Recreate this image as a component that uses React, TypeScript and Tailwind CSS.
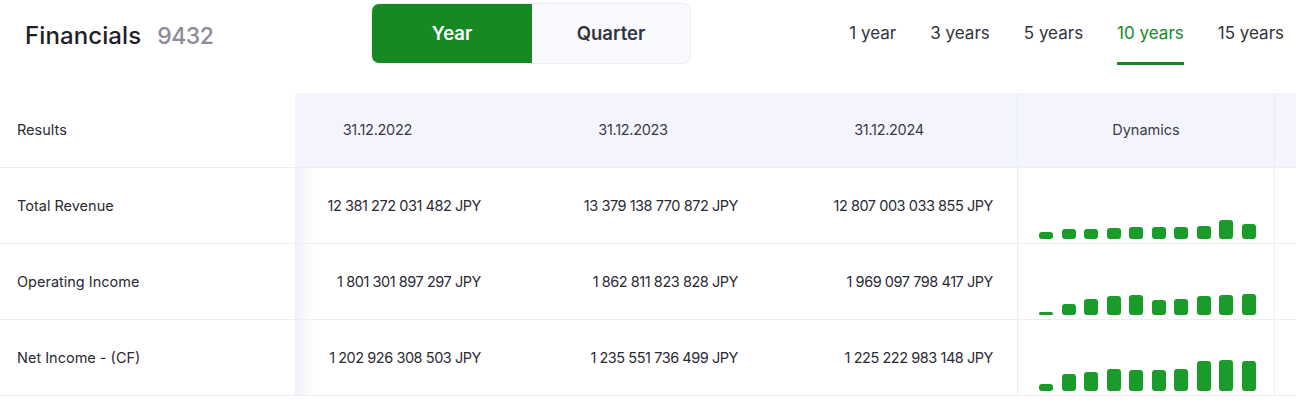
const font = { fontFamily: 'Inter, "Noto Sans", sans-serif' }

const periods = ['1 year', '3 years', '5 years', '10 years', '15 years']

type Row = {
  name: string
  values: string[]
  bars: number[]
}

const rows: Row[] = [
  {
    name: 'Total Revenue',
    values: ['12 381 272 031 482 JPY', '13 379 138 770 872 JPY', '12 807 003 033 855 JPY'],
    bars: [7, 10, 10, 11, 12, 12, 12, 13, 19, 15],
  },
  {
    name: 'Operating Income',
    values: ['1 801 301 897 297 JPY', '1 862 811 823 828 JPY', '1 969 097 798 417 JPY'],
    bars: [3, 11, 16, 19, 20, 15, 16, 19, 20, 21],
  },
  {
    name: 'Net Income - (CF)',
    values: ['1 202 926 308 503 JPY', '1 235 551 736 499 JPY', '1 225 222 983 148 JPY'],
    bars: [7, 17, 19, 22, 21, 21, 22, 30, 31, 30],
  },
]

function Bars({ bars }: { bars: number[] }) {
  return (
    <div className="flex h-full items-end gap-[8.5px] pb-[4px] pl-[21px]">
      {bars.map((h, i) => (
        <div key={i} className="w-[14px] rounded-[3px] bg-[#1a9c2a]" style={{ height: h }} />
      ))}
    </div>
  )
}

export default function App() {
  return (
    <div className="h-[401px] w-[1296px] overflow-hidden bg-white text-[#2a2a35]" style={font}>
      <div className="flex h-[93px] items-start">
        <div className="flex w-[371px] items-baseline gap-[16px] pl-[25px] pt-[18px]">
          <span className="text-[24px] font-medium tracking-[0.1px] text-[#1f1f28]">Financials</span>
          <span className="text-[23px] font-medium tracking-[-0.5px] text-[#8c8c96]">9432</span>
        </div>
        <div className="mt-[3px] flex h-[61px] w-[320px] overflow-hidden rounded-[8px] border border-[#eceef3] bg-[#f9fafd]">
          <div className="flex w-[160px] items-center justify-center bg-[#168925] text-[18.5px] font-semibold text-white">
            Year
          </div>
          <div className="flex flex-1 items-center justify-center text-[18.5px] font-semibold text-[#33333d]">
            Quarter
          </div>
        </div>
        <div className="ml-auto flex gap-[34px] pr-[12px] pt-[22px]">
          {periods.map((p) => (
            <div
              key={p}
              className={
                p === '10 years'
                  ? 'border-b-[3px] border-[#168925] pb-[18px] text-[17px] leading-[22px] text-[#168925]'
                  : 'border-b-[3px] border-transparent pb-[18px] text-[17px] leading-[22px] text-[#33333d]'
              }
            >
              {p}
            </div>
          ))}
        </div>
      </div>

      <div className="text-[14.5px]">
        <div className="flex h-[75px] border-b border-[#eceef3]">
          <div className="flex w-[295px] items-center pl-[17px] text-[#2a2a35]">Results</div>
          <div className="flex flex-1 bg-[#f4f5fc] text-[#3b3b45]">
            <div className="flex w-[210px] items-center justify-end pr-[93px] tracking-[-0.3px]">31.12.2022</div>
            <div className="flex w-[256px] items-center justify-center tracking-[-0.3px]">31.12.2023</div>
            <div className="flex w-[256px] items-center justify-center tracking-[-0.3px]">31.12.2024</div>
            <div className="flex w-[258px] items-center justify-center border-x border-[#e9ebf3]">Dynamics</div>
            <div className="flex-1" />
          </div>
        </div>
        {rows.map((r) => (
          <div key={r.name} className="flex h-[76px] border-b border-[#eceef3]">
            <div className="flex w-[295px] items-center pl-[17px]">{r.name}</div>
            <div className="flex w-[210px] items-center justify-end bg-[linear-gradient(to_right,#eef0f9,#ffffff_18px)] pr-[24px] tracking-[-0.45px]">
              {r.values[0]}
            </div>
            <div className="flex w-[256px] items-center justify-end pr-[23px] tracking-[-0.45px]">{r.values[1]}</div>
            <div className="flex w-[256px] items-center justify-end pr-[24px] tracking-[-0.45px]">{r.values[2]}</div>
            <div className="w-[258px] border-x border-[#eceef3]">
              <Bars bars={r.bars} />
            </div>
            <div className="flex-1" />
          </div>
        ))}
      </div>
    </div>
  )
}
